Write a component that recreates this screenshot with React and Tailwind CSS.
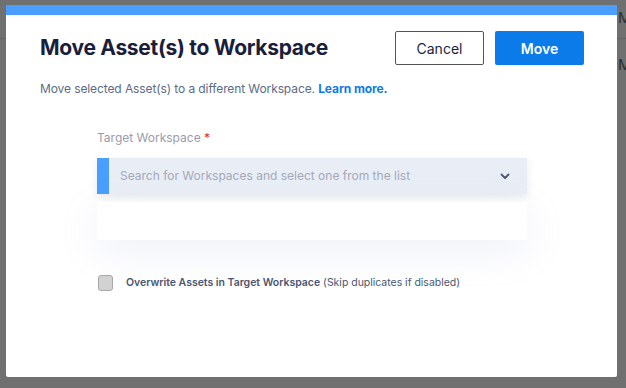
import React from 'react';

const font = { fontFamily: 'Inter, "Noto Sans", sans-serif' };

// Page content behind the dimmed overlay
const BackgroundPage = () => (
  <div className="absolute inset-0 bg-[#707070]">
    <div className="h-[39px] border-b border-[#626262]" />
    <div className="absolute left-[618px] top-[7px] text-[15px] text-[#2f2f2f]">M</div>
    <div className="absolute left-[618px] top-[54px] text-[15px] text-[#2f2f2f]">M</div>
  </div>
);

const Chevron = () => (
  <svg width="12" height="12" viewBox="0 0 12 12" fill="none">
    <path d="M2.5 4.5L6 8l3.5-3.5" stroke="#4b5670" strokeWidth="1.8" strokeLinecap="round" strokeLinejoin="round" />
  </svg>
);

const WorkspaceSelect = () => (
  <div className="flex flex-col">
    <label className="text-[12px] text-[#9a9cab] mb-[12px] leading-[16px]">
      Target Workspace <span className="text-[#e0243c]">*</span>
    </label>
    <div className="flex h-[36px] bg-[#e9eef6] shadow-[0_3px_8px_rgba(60,70,100,0.12)]">
      <div className="w-[12px] bg-[#4a9eff]" />
      <div className="flex flex-1 items-center justify-between pl-[11px] pr-[16px]">
        <span className="text-[12px] text-[#a6a9ba]">Search for Workspaces and select one from the list</span>
        <Chevron />
      </div>
    </div>
    <div className="mt-[8px] h-[38px] bg-white shadow-[0_10px_40px_rgba(120,140,190,0.14)]" />
  </div>
);

const App = () => {
  return (
    <div className="relative w-[626px] h-[388px] overflow-hidden" style={font}>
      <BackgroundPage />
      <div className="absolute left-[6px] top-[5px] w-[611px] h-[372px] bg-white rounded-b-[2px] flex flex-col">
        <div className="h-[10px] bg-[#4a9eff]" />
        <div className="flex items-center justify-between pl-[34px] pr-[33px] pt-[16px]">
          <h1 className="text-[21px] font-bold text-[#1b1e3a] tracking-[-0.3px]">Move Asset(s) to Workspace</h1>
          <div className="flex gap-[11px]">
            <button className="w-[89px] h-[34px] border border-[#555] rounded-[2px] text-[14px] text-[#1b1e3a] bg-white">
              Cancel
            </button>
            <button className="w-[89px] h-[34px] rounded-[2px] text-[14px] font-semibold text-white bg-[#0a7be8]">
              Move
            </button>
          </div>
        </div>
        <p className="pl-[34px] mt-[15px] text-[12px] text-[#5b6b88] tracking-[-0.1px]">
          Move selected Asset(s) to a different Workspace.{' '}
          <span className="font-bold text-[#0a7be8]">Learn more.</span>
        </p>
        <div className="pl-[91px] pr-[90px] mt-[32px]">
          <WorkspaceSelect />
          <div className="flex items-center mt-[35px] pl-[1px]">
            <div className="w-[15px] h-[16px] rounded-[3px] bg-[#d2d2d2] border border-[#a8a8a8]" />
            <span className="ml-[13px] text-[10.5px] tracking-[-0.02px] text-[#4b5670]">
              <span className="font-semibold">Overwrite Assets in Target Workspace</span> (Skip duplicates if disabled)
            </span>
          </div>
        </div>
      </div>
    </div>
  );
};

export default App;
